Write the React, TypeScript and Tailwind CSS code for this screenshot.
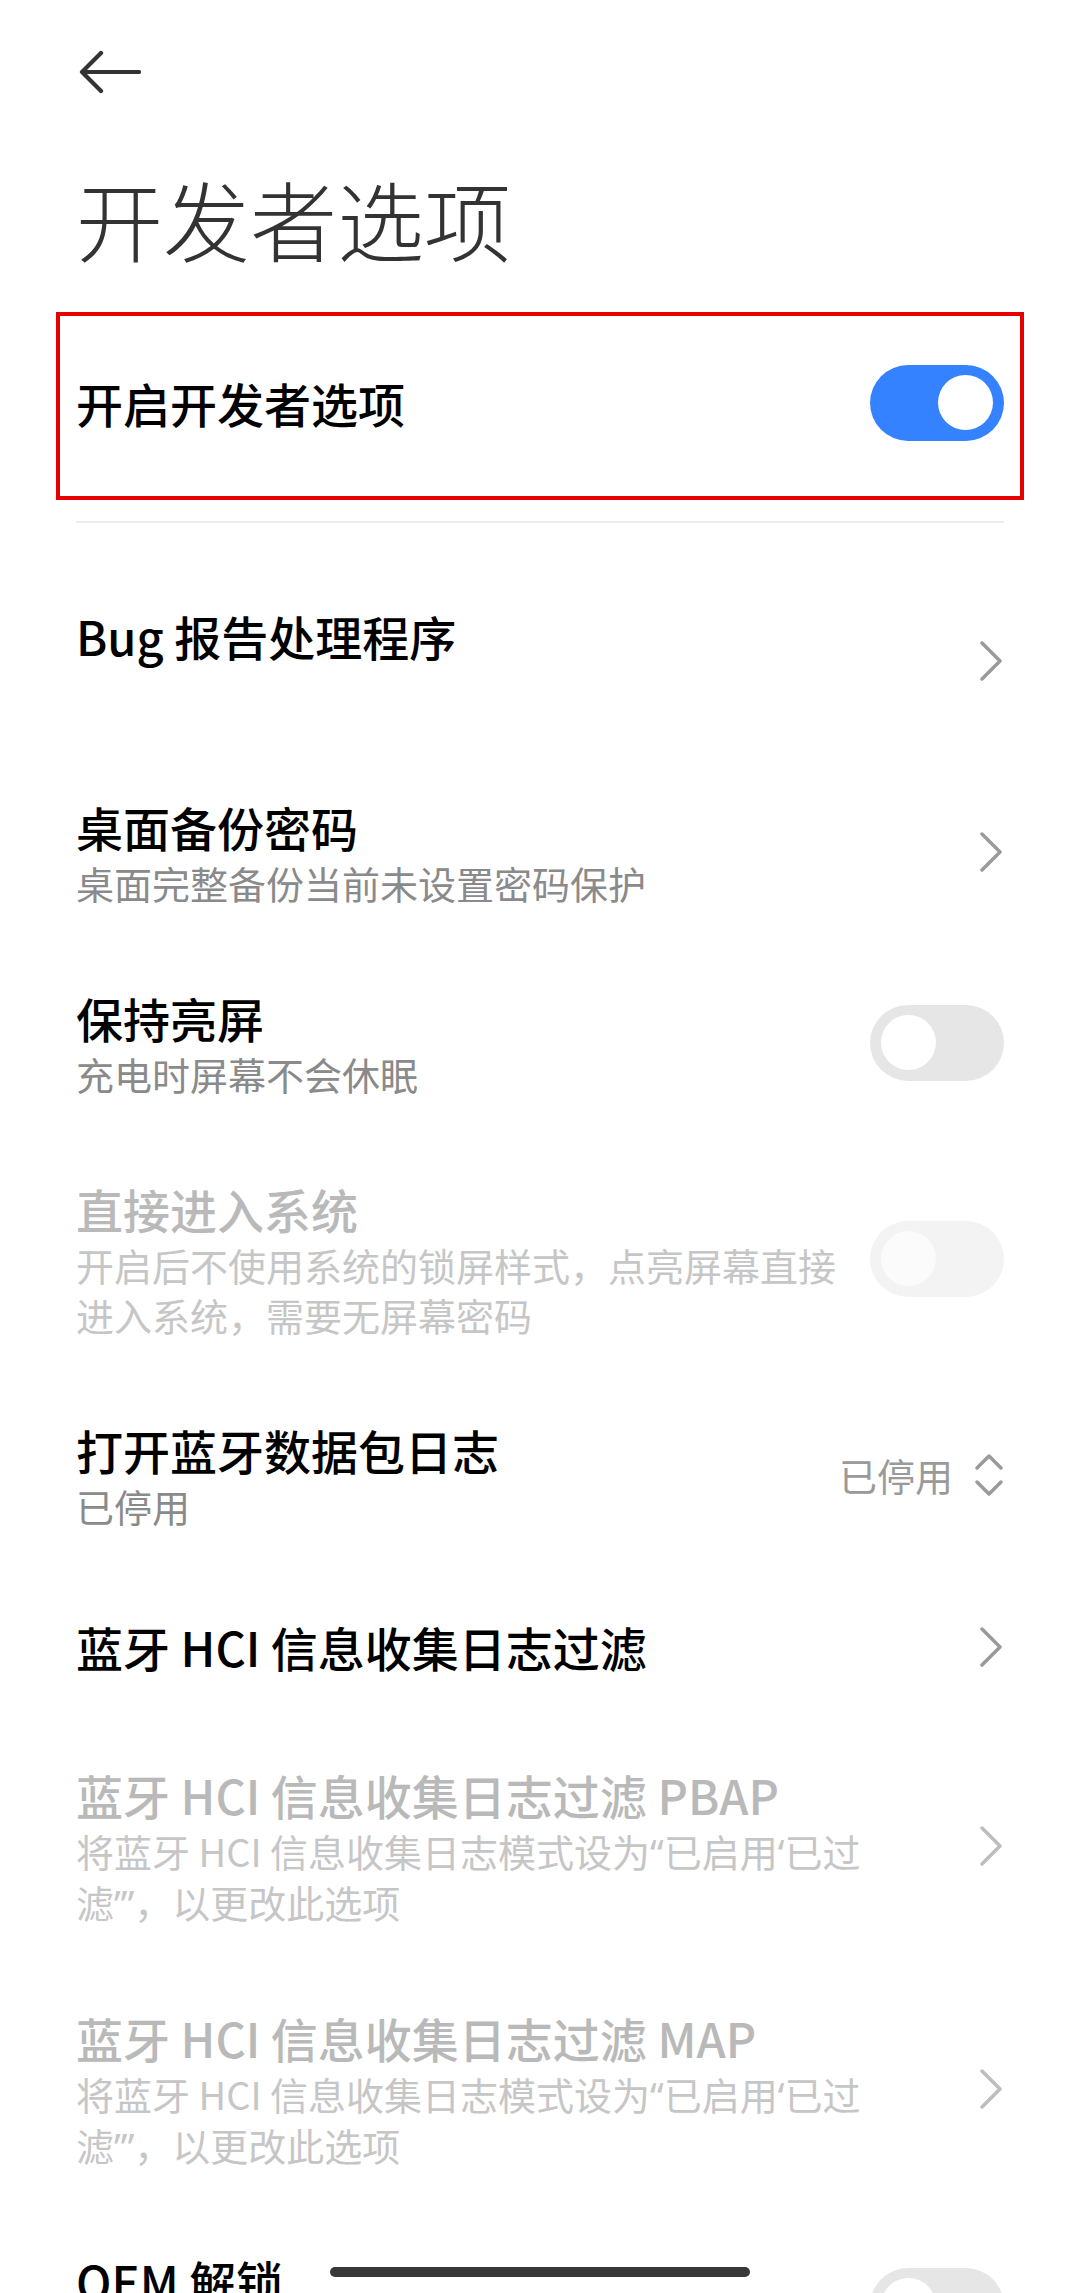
import React from "react"

type Row = {
  title: string
  summary?: React.ReactNode
  kind: "chevron" | "switch" | "value"
  disabled?: boolean
  on?: boolean
  value?: string
  blankSummary?: boolean
  tall?: boolean
}

// latin quotes stay narrow, like the device font
const Q = ({ c }: { c: string }) => <span className="font-['Noto_Sans',sans-serif]">{c}</span>

const hciNote = (
  <>
    将蓝牙 HCI 信息收集日志模式设为<Q c="“" />已启用<Q c="‘" />已过滤<Q c="’" /><Q c="”" />，以更改此选项
  </>
)

const rows: Row[] = [
  { title: "Bug 报告处理程序", kind: "chevron", blankSummary: true },
  { title: "桌面备份密码", summary: "桌面完整备份当前未设置密码保护", kind: "chevron" },
  { title: "保持亮屏", summary: "充电时屏幕不会休眠", kind: "switch" },
  {
    title: "直接进入系统",
    summary: "开启后不使用系统的锁屏样式，点亮屏幕直接进入系统，需要无屏幕密码",
    kind: "switch",
    disabled: true,
  },
  { title: "打开蓝牙数据包日志", summary: "已停用", kind: "value", value: "已停用" },
  { title: "蓝牙 HCI 信息收集日志过滤", kind: "chevron", tall: true },
  { title: "蓝牙 HCI 信息收集日志过滤 PBAP", summary: hciNote, kind: "chevron", disabled: true },
  { title: "蓝牙 HCI 信息收集日志过滤 MAP", summary: hciNote, kind: "chevron", disabled: true },
  { title: "OEM 解锁", summary: "允许解锁引导加载程序", kind: "switch" },
]

export default function App() {
  return (
    <div className="relative h-[2293px] w-[1080px] overflow-hidden bg-white font-['Noto_Sans_CJK_SC',sans-serif]">
      {/* Header */}
      <div className="flex h-[144px] items-center px-[79px]">
        <svg width="62" height="44" viewBox="0 0 62 44" fill="none">
          <path d="M60 22H3M22 3L3 22l19 19" stroke="#333" strokeWidth="4.2" strokeLinecap="round" strokeLinejoin="round" />
        </svg>
      </div>

      <h1 className="mt-[31px] px-[76px] text-[87px] font-light leading-[86px] text-[#333]">开发者选项</h1>

      {/* Master switch (highlighted) */}
      <div className="mx-[56px] mt-[51px] flex h-[188px] items-center border-4 border-[#e60000] px-[16px] pb-[7px]">
        <span className="flex-1 text-[47px] font-medium leading-[62px] text-black">开启开发者选项</span>
        <Toggle on />
      </div>

      <div className="mx-[76px] mt-[21px] h-[2px] bg-[#ececec]" />

      <div className="mt-[42px]">
        {rows.map((r) => (
          <SettingRow key={r.title} row={r} />
        ))}
      </div>

      {/* Gesture bar */}
      <div className="absolute bottom-[16px] left-1/2 h-[10px] w-[420px] -translate-x-1/2 rounded-full bg-[#383838]" />
    </div>
  )
}

function SettingRow({ row }: { row: Row }) {
  const titleColor = row.disabled ? "text-[#b9b9b9]" : "text-black"
  const summaryColor = row.disabled ? "text-[#c6c6c6]" : "text-[#8a8a8a]"
  return (
    <div className={`flex items-center px-[76px] ${row.tall ? "py-[46px]" : "py-[39.5px]"}`}>
      <div className="min-w-0 flex-1">
        <p className={`text-[47px] font-medium leading-[62px] ${titleColor}`}>{row.title}</p>
        {row.summary && <p className={`text-[38px] leading-[50px] ${summaryColor}`}>{row.summary}</p>}
        {row.blankSummary && <div className="h-[50px]" />}
      </div>
      {row.kind === "chevron" && (
        <svg className="ml-[80px] shrink-0" width="28" height="40" viewBox="0 0 28 40" fill="none">
          <path
            d="M6 2l18 18L6 38"
            stroke={row.disabled ? "#bdbdbd" : "#9a9a9a"}
            strokeWidth="3.5"
            strokeLinecap="round"
            strokeLinejoin="round"
          />
        </svg>
      )}
      {row.kind === "switch" && (
        <div className="ml-[24px] shrink-0">
          <Toggle on={row.on} disabled={row.disabled} />
        </div>
      )}
      {row.kind === "value" && (
        <div className="ml-[24px] flex shrink-0 items-center gap-[21px]">
          <span className="text-[38px] leading-[50px] text-[#9a9a9a]">{row.value}</span>
          <svg width="30" height="46" viewBox="0 0 30 46" fill="none">
            <path
              d="M3 16L15 4l12 12M3 30l12 12 12-12"
              stroke="#9a9a9a"
              strokeWidth="3.5"
              strokeLinecap="round"
              strokeLinejoin="round"
            />
          </svg>
        </div>
      )}
    </div>
  )
}

function Toggle({ on = false, disabled = false }: { on?: boolean; disabled?: boolean }) {
  const track = on ? "bg-[#3482ff]" : disabled ? "bg-[#f3f3f3]" : "bg-[#e6e6e6]"
  const knob = disabled ? "bg-[#fbfbfb]" : "bg-white"
  return (
    <div className={`flex h-[76px] w-[134px] items-center rounded-full px-[11px] ${on ? "justify-end" : "justify-start"} ${track}`}>
      <div className={`h-[55px] w-[55px] rounded-full ${knob}`} />
    </div>
  )
}
